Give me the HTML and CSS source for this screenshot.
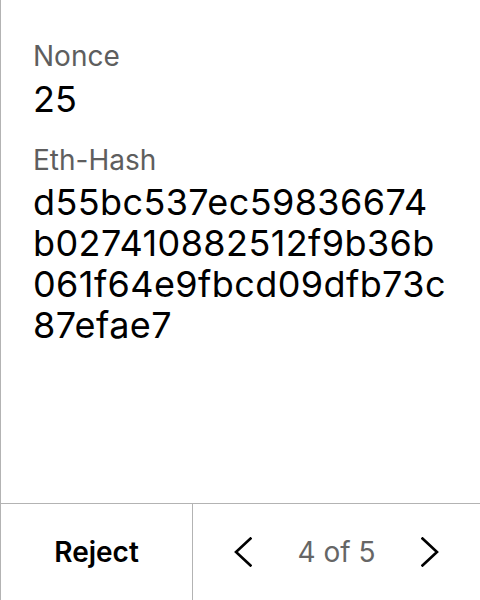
FILE: index.html
```html
<!DOCTYPE html>
<html lang="en">
<head>
<meta charset="utf-8">
<title>Transaction</title>
<link rel="stylesheet" href="styles.css">
</head>
<body>
<div class="screen">
  <main class="details">
    <div class="field">
      <div class="label">Nonce</div>
      <div class="value">25</div>
    </div>
    <div class="field">
      <div class="label">Eth-Hash</div>
      <div class="value hash">d55bc537ec59836674<br>b027410882512f9b36b<br>061f64e9fbcd09dfb73c<br>87efae7</div>
    </div>
  </main>
  <footer class="actions">
    <button class="reject" type="button">Reject</button>
    <div class="pager">
      <button class="nav" type="button" aria-label="Previous">
        <svg width="18" height="30" viewBox="0 0 18 30"><polyline points="16.5,1.5 2,15 16.5,28.5" fill="none" stroke="#000" stroke-width="2.6" stroke-linecap="square" stroke-linejoin="miter"/></svg>
      </button>
      <span class="count">4 of 5</span>
      <button class="nav" type="button" aria-label="Next">
        <svg width="18" height="30" viewBox="0 0 18 30"><polyline points="1.5,1.5 16,15 1.5,28.5" fill="none" stroke="#000" stroke-width="2.6" stroke-linecap="square" stroke-linejoin="miter"/></svg>
      </button>
    </div>
  </footer>
</div>
</body>
</html>
```

FILE: styles.css
```css
html, body {
  margin: 0;
  padding: 0;
  background: #fff;
}

body {
  font-family: Inter, "Noto Sans", sans-serif;
  color: #000;
}

.screen {
  width: 480px;
  height: 600px;
  box-sizing: border-box;
  border-left: 1px solid #b3b3b3;
  display: flex;
  flex-direction: column;
}

.details {
  flex: 1;
  padding: 39px 0 0 32px;
  display: flex;
  flex-direction: column;
  gap: 23px;
}

.label {
  font-size: 28px;
  line-height: 34px;
  color: #5e5e5e;
  margin-bottom: 6px;
}

.value {
  font-size: 36px;
  line-height: 41px;
  color: #000;
  white-space: nowrap;
}

.hash {
  margin-top: -1px;
  letter-spacing: 0.4px;
}

.actions {
  height: 96px;
  border-top: 1px solid #b3b3b3;
  display: flex;
}

.reject {
  width: 192px;
  border: 0;
  border-right: 1px solid #b3b3b3;
  background: none;
  font-family: inherit;
  font-size: 28px;
  font-weight: 600;
  color: #000;
  padding: 0;
}

.pager {
  flex: 1;
  display: flex;
  align-items: center;
  justify-content: space-between;
  padding: 0 41px;
}

.nav {
  border: 0;
  background: none;
  padding: 0;
  display: flex;
}

.count {
  font-size: 28px;
  color: #666;
}
```
